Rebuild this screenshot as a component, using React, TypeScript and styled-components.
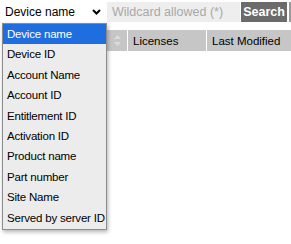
import React from "react";
import styled, { createGlobalStyle } from "styled-components";

const Global = createGlobalStyle`
  body {
    margin: 0;
    background: #fff;
    font-family: "Liberation Sans", Arial, sans-serif;
    font-size: 12px;
    color: #000;
  }
`;

const Page = styled.div`
  position: relative;
  width: 291px;
  height: 244px;
  overflow: hidden;
`;

const Toolbar = styled.div`
  display: flex;
  align-items: center;
  height: 24px;
  padding-left: 2px;
  gap: 1px;
`;

const SelectBox = styled.div`
  display: flex;
  align-items: center;
  justify-content: space-between;
  width: 104px;
  height: 22px;
  padding: 0 5px 0 3px;
  box-sizing: border-box;
  background: #fff;
  font-size: 12px;
`;

const SearchInput = styled.div`
  flex: 0 0 133px;
  height: 20px;
  line-height: 20px;
  padding-left: 5px;
  box-sizing: border-box;
  background: #eeeeee;
  color: #a8a8a8;
  font-size: 12.5px;
`;

const SearchButton = styled.div`
  flex: 0 0 46px;
  height: 20px;
  line-height: 20px;
  text-align: center;
  background: #6b6b6b;
  color: #fff;
  font-weight: bold;
  font-size: 12.5px;
`;

const Edge = styled.div`
  flex: 1;
  height: 20px;
  margin-left: 1px;
  background: #9a9a9a;
`;

const Header = styled.div`
  display: grid;
  grid-template-columns: 20px 78px 1fr;
  gap: 1px;
  margin: 6px 0 0 107px;
  height: 21px;
`;

const HeadCell = styled.div<{ $center?: boolean }>`
  display: flex;
  align-items: center;
  justify-content: ${(p) => (p.$center ? "center" : "flex-start")};
  padding-left: ${(p) => (p.$center ? "0" : "5px")};
  background: #c6c6c6;
  font-size: 11.5px;
`;

const Dropdown = styled.ul`
  position: absolute;
  left: 2px;
  top: 23px;
  width: 105px;
  margin: 0;
  padding: 0 0 1px;
  list-style: none;
  box-sizing: border-box;
  background: #ececec;
  border: 1px solid #8c8c8c;
  box-shadow: 1px 2px 4px rgba(0, 0, 0, 0.3);
`;

const Option = styled.li<{ $active?: boolean }>`
  height: 20.4px;
  line-height: 20px;
  padding-left: 4px;
  white-space: nowrap;
  font-size: 11.5px;
  letter-spacing: -0.2px;
  background: ${(p) => (p.$active ? "#1e6ee0" : "transparent")};
  color: ${(p) => (p.$active ? "#fff" : "#000")};
`;

const options = [
  "Device name",
  "Device ID",
  "Account Name",
  "Account ID",
  "Entitlement ID",
  "Activation ID",
  "Product name",
  "Part number",
  "Site Name",
  "Served by server ID",
];

const Chevron = () => (
  <svg width="9" height="6" viewBox="0 0 9 6">
    <path d="M1 1l3.5 3.5L8 1" fill="none" stroke="#000" strokeWidth="2" />
  </svg>
);

const SortIcon = () => (
  <svg width="7" height="11" viewBox="0 0 7 11">
    <path d="M3.5 0L7 4H0z M3.5 11L0 7h7z" fill="#dcdcdc" />
  </svg>
);

export default function App() {
  return (
    <Page>
      <Global />
      <Toolbar>
        <SelectBox>
          <span>Device name</span>
          <Chevron />
        </SelectBox>
        <SearchInput>Wildcard allowed (*)</SearchInput>
        <SearchButton>Search</SearchButton>
        <Edge />
      </Toolbar>
      <Header>
        <HeadCell $center>
          <SortIcon />
        </HeadCell>
        <HeadCell>Licenses</HeadCell>
        <HeadCell>Last Modified</HeadCell>
      </Header>
      <Dropdown>
        {options.map((o, i) => (
          <Option key={o} $active={i === 0}>
            {o}
          </Option>
        ))}
      </Dropdown>
    </Page>
  );
}
